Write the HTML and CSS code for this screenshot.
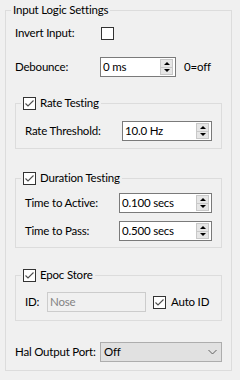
FILE: index.html
```html
<!DOCTYPE html>
<html lang="en">
<head>
    <meta charset="UTF-8">
    <meta name="viewport" content="width=device-width, initial-scale=1.0">
    <title>Input Logic Settings</title>
    <link rel="stylesheet" href="styles.css">
</head>
<body>
    <fieldset class="group outer">
        <legend class="title">Input Logic Settings</legend>
        <div class="body outer-body">
            <div class="row row-invert">
                <span class="label label-main">Invert Input:</span>
                <span class="check"></span>
            </div>

            <div class="row row-debounce">
                <span class="label label-main">Debounce:</span>
                <div class="spin spin-debounce">
                    <span class="val">0 ms</span>
                    <span class="spin-btns"><span class="btn up"></span><span class="btn down"></span></span>
                </div>
                <span class="hint">0=off</span>
            </div>

            <fieldset class="group sub sub-rate">
                <legend class="title">
                    <span class="check"><svg width="11" height="11" viewBox="0 0 11 11"><path d="M1.5 5.5 L4 8 L9.5 2.5" fill="none" stroke="#4d4d4d" stroke-width="1.1"/></svg></span>
                    Rate Testing
                </legend>
                <div class="body">
                    <div class="row">
                        <span class="label label-rate">Rate Threshold:</span>
                        <div class="spin spin-fill">
                            <span class="val">10.0 Hz</span>
                            <span class="spin-btns"><span class="btn up"></span><span class="btn down"></span></span>
                        </div>
                    </div>
                </div>
            </fieldset>

            <fieldset class="group sub sub-duration">
                <legend class="title">
                    <span class="check"><svg width="11" height="11" viewBox="0 0 11 11"><path d="M1.5 5.5 L4 8 L9.5 2.5" fill="none" stroke="#4d4d4d" stroke-width="1.1"/></svg></span>
                    Duration Testing
                </legend>
                <div class="body">
                    <div class="row">
                        <span class="label label-duration">Time to Active:</span>
                        <div class="spin spin-fill">
                            <span class="val">0.100 secs</span>
                            <span class="spin-btns"><span class="btn up"></span><span class="btn down"></span></span>
                        </div>
                    </div>
                    <div class="row row-pass">
                        <span class="label label-duration">Time to Pass:</span>
                        <div class="spin spin-fill">
                            <span class="val">0.500 secs</span>
                            <span class="spin-btns"><span class="btn up"></span><span class="btn down"></span></span>
                        </div>
                    </div>
                </div>
            </fieldset>

            <fieldset class="group sub sub-epoc">
                <legend class="title">
                    <span class="check"><svg width="11" height="11" viewBox="0 0 11 11"><path d="M1.5 5.5 L4 8 L9.5 2.5" fill="none" stroke="#4d4d4d" stroke-width="1.1"/></svg></span>
                    Epoc Store
                </legend>
                <div class="body">
                    <div class="row">
                        <span class="label label-id">ID:</span>
                        <div class="textbox disabled">Nose</div>
                        <span class="check check-auto"><svg width="11" height="11" viewBox="0 0 11 11"><path d="M1.5 5.5 L4 8 L9.5 2.5" fill="none" stroke="#4d4d4d" stroke-width="1.1"/></svg></span>
                        <span class="label">Auto ID</span>
                    </div>
                </div>
            </fieldset>

            <div class="row row-hal">
                <span class="label label-main">Hal Output Port:</span>
                <div class="combo">
                    <span class="val">Off</span>
                    <svg class="chevron" width="9" height="6" viewBox="0 0 9 6"><path d="M0.5 1 L4.5 5 L8.5 1" fill="none" stroke="#606060" stroke-width="1"/></svg>
                </div>
            </div>
        </div>
    </fieldset>
</body>
</html>
```

FILE: styles.css
```css
body {
    margin: 0;
    background-color: #f0f0f0;
    font-family: Lato, "Noto Sans", sans-serif;
    font-size: 11.5px;
    letter-spacing: -0.2px;
    line-height: 16px;
    color: #000;
}
.group {
    border: 1px solid #dcdcdc;
    margin: 0;
    padding: 0;
    min-width: 0;
}
.title {
    margin-left: 5px;
    padding: 0 2px;
    height: 16px;
    display: flex;
    align-items: center;
    gap: 4px;
}
.outer {
    margin: 2px 0 0 5px;
    width: 227px;
    box-sizing: border-box;
}
.body {
    padding: 0 9px;
}
.outer-body {
    padding: 5px 9px 8px;
}
.row {
    display: flex;
    align-items: center;
    height: 20px;
}
.row-debounce { margin-top: 14px; }
.row-pass { margin-top: 8px; }
.row-hal { margin-top: 21px; }

.group.sub-rate { margin-top: 18px; }
.sub-rate .body { padding-top: 10px; padding-bottom: 7px; }
.group.sub-duration { margin-top: 21px; }
.sub-duration .body { padding-top: 7px; padding-bottom: 6px; }
.group.sub-epoc { margin-top: 19px; }
.sub-epoc .body { padding-top: 9px; padding-bottom: 8px; }

.label { white-space: nowrap; }
.label-main { width: 85px; flex: none; }
.label-rate { width: 97px; flex: none; }
.label-duration { width: 94px; flex: none; }
.label-id { width: 22px; flex: none; }

.check {
    width: 13px;
    height: 13px;
    box-sizing: border-box;
    border: 1px solid #333;
    background: #fff;
    display: flex;
    align-items: center;
    justify-content: center;
    flex: none;
}
.row-invert .check { margin-left: 1px; }
.check-auto { margin: 0 5px 0 7px; }

.spin {
    display: flex;
    align-items: stretch;
    height: 20px;
    box-sizing: border-box;
    border: 1px solid #7a7a7a;
    background: #fff;
}
.spin-debounce { width: 76px; }
.spin-fill { flex: 1; }
.val {
    flex: 1;
    padding-left: 2px;
    line-height: 18px;
}
.spin-btns {
    width: 13px;
    margin: 1px 2px 1px 0;
    display: flex;
    flex-direction: column;
}
.btn {
    flex: 1;
    background: #e6e6e6;
    border: 1px solid #c8c8c8;
    display: flex;
    align-items: center;
    justify-content: center;
}
.btn + .btn { border-top: none; }
.btn::after {
    content: "";
    border-left: 3px solid transparent;
    border-right: 3px solid transparent;
}
.up::after { border-bottom: 3px solid #000; }
.down::after { border-top: 3px solid #000; }

.hint { margin-left: 8px; }

.textbox {
    width: 99px;
    height: 20px;
    box-sizing: border-box;
    padding-left: 2px;
    line-height: 18px;
    flex: none;
}
.textbox.disabled {
    border: 1px solid #cccccc;
    background: #f0f0f0;
    color: #838383;
}

.combo {
    flex: 1;
    height: 20px;
    box-sizing: border-box;
    border: 1px solid #adadad;
    background: #e1e1e1;
    display: flex;
    align-items: center;
    padding: 0 4px 0 3px;
}
.combo .val { padding-left: 0; }
.chevron { flex: none; }
```
